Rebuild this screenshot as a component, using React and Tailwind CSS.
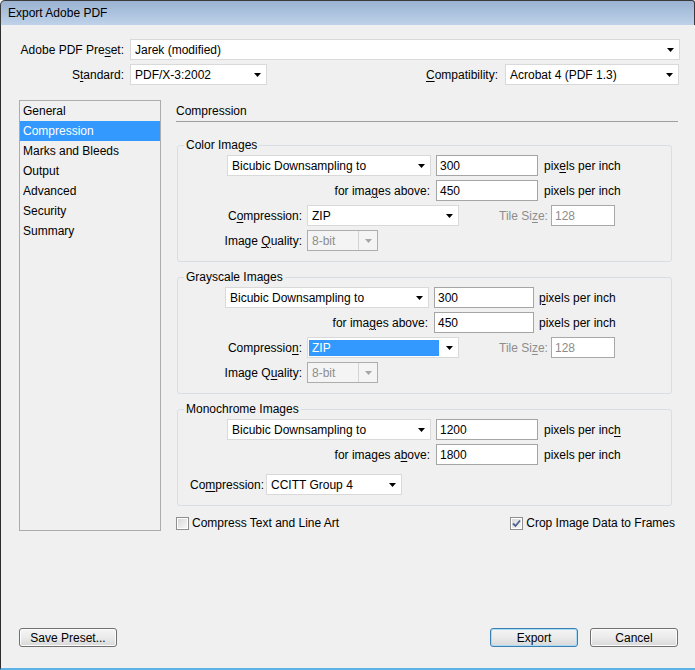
import React from "react";

const Arrow = ({ disabled }) => (
  <svg width="7" height="4" viewBox="0 0 7 4" className="shrink-0 block">
    <path d="M0 0H7L3.5 4Z" fill={disabled ? "#a6a6a6" : "#000"} />
  </svg>
);

function Select({ className, children }) {
  return (
    <div className={`flex items-center h-[21px] bg-white border border-[#d9d9d9] ${className}`}>
      <div className="flex-1 pl-[4px] whitespace-nowrap overflow-hidden">{children}</div>
      <div className="mr-[5px]">
        <Arrow />
      </div>
    </div>
  );
}

function HlSelect({ className, children }) {
  return (
    <div className={`flex items-center h-[21px] bg-white border border-[#d9d9d9] ${className}`}>
      <div className="ml-[1px] w-[130px] h-[16px] bg-[#3399ff] text-white pl-[3px] flex items-center">
        {children}
      </div>
      <div className="ml-auto mr-[5px]">
        <Arrow />
      </div>
    </div>
  );
}

function DisabledSelect({ children }) {
  return (
    <div className="flex h-[21px] w-[71px] bg-[#f4f4f4] border border-[#adadad]">
      <div className="w-[51px] border-r border-[#d4d4d4] pl-[4px] flex items-center text-[#8d8d8d]">
        {children}
      </div>
      <div className="flex-1 flex items-center justify-center">
        <Arrow disabled />
      </div>
    </div>
  );
}

function Input({ className, children }) {
  return (
    <div className={`h-[21px] bg-white border border-[#a5a5a5] pl-[3px] flex items-center ${className}`}>
      {children}
    </div>
  );
}

const U = ({ children }) => <span className="underline underline-offset-[2px]">{children}</span>;

function Checkbox({ checked }) {
  return (
    <div className="w-[13px] h-[13px] border border-[#8f8f8f] bg-white p-[1px] shrink-0">
      <div className="w-full h-full bg-gradient-to-br from-[#d9d9d9] to-[#f7f7f7] flex items-center justify-center">
        {checked && (
          <svg width="9" height="9" viewBox="0 0 9 9">
            <path d="M1 4.5L3.5 7L8 1.5" stroke="#4c6191" strokeWidth="1.8" fill="none" />
          </svg>
        )}
      </div>
    </div>
  );
}

function Button({ className, children, def }) {
  return (
    <div
      className={`h-[19px] flex items-center justify-center rounded-[3px] border bg-gradient-to-b from-[#f4f4f4] via-[#ebebeb] to-[#d8d8d8] ${
        def ? "border-[#3c7fb1] shadow-[inset_0_0_0_1px_#a8dcf7]" : "border-[#707070] shadow-[inset_0_0_0_1px_#fcfcfc]"
      } ${className}`}
    >
      {children}
    </div>
  );
}

export default function App() {
  return (
    <div className="w-[695px] h-[670px] flex flex-col font-['Liberation_Sans',Arial,sans-serif] text-[12px] leading-[16px] text-black bg-white">
      {/* Title bar */}
      <div className="h-[25px] shrink-0 flex items-center pl-[7px] border-t border-l border-r border-[#3a3a3a] rounded-tl-[5px] rounded-tr-[3px] bg-gradient-to-b from-[#9ab3d1] to-[#bed2e9]">
        Export Adobe PDF
      </div>

      {/* Body */}
      <div className="flex-1 flex flex-col bg-[#f0f0f0] border-l border-[#2e2e2e] border-b-2 border-b-[#5ab4e6]">
        {/* Preset row */}
        <div className="mt-[14px] flex items-center h-[21px]">
          <div className="w-[123px] text-right">
            Adobe PDF Pre<U>s</U>et:
          </div>
          <Select className="ml-[6px] w-[550px]">Jarek (modified)</Select>
        </div>
        {/* Standard row */}
        <div className="mt-[4px] flex items-center h-[21px]">
          <div className="w-[123px] text-right">
            S<U>t</U>andard:
          </div>
          <Select className="ml-[6px] w-[137px]">PDF/X-3:2002</Select>
          <div className="flex-1 text-right">
            <U>C</U>ompatibility:
          </div>
          <Select className="ml-[7px] mr-[16px] w-[174px]">Acrobat 4 (PDF 1.3)</Select>
        </div>

        {/* Main */}
        <div className="mt-[15px] flex">
          <div className="ml-[18px] w-[142px] h-[431px] border border-[#acacac] bg-[#f0f0f0] flex flex-col">
            <div className="h-[20px] flex items-center pl-[3px]">General</div>
            <div className="h-[20px] flex items-center pl-[3px] bg-[#3399ff] text-white">Compression</div>
            <div className="h-[20px] flex items-center pl-[3px]">Marks and Bleeds</div>
            <div className="h-[20px] flex items-center pl-[3px]">Output</div>
            <div className="h-[20px] flex items-center pl-[3px]">Advanced</div>
            <div className="h-[20px] flex items-center pl-[3px]">Security</div>
            <div className="h-[20px] flex items-center pl-[3px]">Summary</div>
          </div>

          <div className="ml-[15px] w-[502px] flex flex-col">
            <div className="h-[22px] flex items-center border-b border-[#a0a0a0]">Compression</div>

            {/* Color Images */}
            <fieldset className="mt-[15px] ml-[1px] w-[495px] border border-[#d5dfe5] rounded-[3px] pl-[6px] pb-[10px]">
              <legend className="px-[2px] leading-[16px]">Color Images</legend>
              <div className="mt-[2px] flex items-center h-[21px]">
                <Select className="ml-[43px] w-[204px]">Bicubic Downsampling to</Select>
                <Input className="ml-[5px] w-[102px]">300</Input>
                <div className="ml-[6px]">
                  pix<U>e</U>ls per inch
                </div>
              </div>
              <div className="mt-[4px] flex items-center h-[21px]">
                <div className="w-[246px] text-right">
                  for ima<U>g</U>es above:
                </div>
                <Input className="ml-[6px] w-[102px]">450</Input>
                <div className="ml-[6px]">pixels per inch</div>
              </div>
              <div className="mt-[4px] flex items-center h-[21px]">
                <div className="w-[118px] text-right">
                  C<U>o</U>mpression:
                </div>
                <Select className="ml-[5px] w-[152px]">ZIP</Select>
                <div className="ml-[40px] w-[52px] text-[#8d8d8d]">
                  Tile Si<U>z</U>e:
                </div>
                <Input className="w-[64px] bg-[#f0f0f0] text-[#8d8d8d] border-[#a8a8a8]">128</Input>
              </div>
              <div className="mt-[4px] flex items-center h-[21px]">
                <div className="w-[118px] text-right">
                  Image <U>Q</U>uality:
                </div>
                <div className="ml-[5px]">
                  <DisabledSelect>8-bit</DisabledSelect>
                </div>
              </div>
            </fieldset>

            {/* Grayscale Images */}
            <fieldset className="mt-[7px] ml-[1px] w-[495px] border border-[#d5dfe5] rounded-[3px] pl-[6px] pb-[10px]">
              <legend className="px-[2px] leading-[16px]">Grayscale Images</legend>
              <div className="mt-[2px] flex items-center h-[21px]">
                <Select className="ml-[41px] w-[204px]">Bicubic Downsampling to</Select>
                <Input className="ml-[5px] w-[100px]">300</Input>
                <div className="ml-[5px]">
                  <U>p</U>ixels per inch
                </div>
              </div>
              <div className="mt-[4px] flex items-center h-[21px]">
                <div className="w-[244px] text-right">
                  for ima<U>g</U>es above:
                </div>
                <Input className="ml-[6px] w-[100px]">450</Input>
                <div className="ml-[5px]">pixels per inch</div>
              </div>
              <div className="mt-[4px] flex items-center h-[21px]">
                <div className="w-[118px] text-right">
                  Compressio<U>n</U>:
                </div>
                <HlSelect className="ml-[5px] w-[152px]">ZIP</HlSelect>
                <div className="ml-[40px] w-[52px] text-[#8d8d8d]">
                  Tile Si<U>z</U>e:
                </div>
                <Input className="w-[64px] bg-[#f0f0f0] text-[#8d8d8d] border-[#a8a8a8]">128</Input>
              </div>
              <div className="mt-[4px] flex items-center h-[21px]">
                <div className="w-[118px] text-right">
                  Image Q<U>u</U>ality:
                </div>
                <div className="ml-[5px]">
                  <DisabledSelect>8-bit</DisabledSelect>
                </div>
              </div>
            </fieldset>

            {/* Monochrome Images */}
            <fieldset className="mt-[7px] ml-[1px] w-[495px] border border-[#d5dfe5] rounded-[3px] pl-[6px] pb-[10px]">
              <legend className="px-[2px] leading-[16px]">Monochrome Images</legend>
              <div className="mt-[2px] flex items-center h-[21px]">
                <Select className="ml-[43px] w-[204px]">Bicubic Downsampling to</Select>
                <Input className="ml-[5px] w-[102px]">1200</Input>
                <div className="ml-[6px]">
                  pixels per inc<U>h</U>
                </div>
              </div>
              <div className="mt-[4px] flex items-center h-[21px]">
                <div className="w-[246px] text-right">
                  for images a<U>b</U>ove:
                </div>
                <Input className="ml-[6px] w-[102px]">1800</Input>
                <div className="ml-[6px]">pixels per inch</div>
              </div>
              <div className="mt-[9px] flex items-center h-[21px]">
                <div className="ml-[6px] w-[76px]">
                  Co<U>m</U>pression:
                </div>
                <Select className="w-[136px]">CCITT Group 4</Select>
              </div>
            </fieldset>

            {/* Checkboxes */}
            <div className="mt-[9px] h-[16px] flex items-center pr-[3px]">
              <Checkbox />
              <div className="ml-[3px]">Compress Text and Line Art</div>
              <div className="ml-auto">
                <Checkbox checked />
              </div>
              <div className="ml-[3px]">Crop Image Data to Frames</div>
            </div>
          </div>
        </div>

        {/* Buttons */}
        <div className="mt-auto mb-[21px] flex items-center">
          <Button className="ml-[18px] w-[98px]">Save Preset...</Button>
          <Button def className="ml-auto w-[88px]">
            Export
          </Button>
          <Button className="ml-[12px] mr-[17px] w-[88px]">Cancel</Button>
        </div>
      </div>
    </div>
  );
}
